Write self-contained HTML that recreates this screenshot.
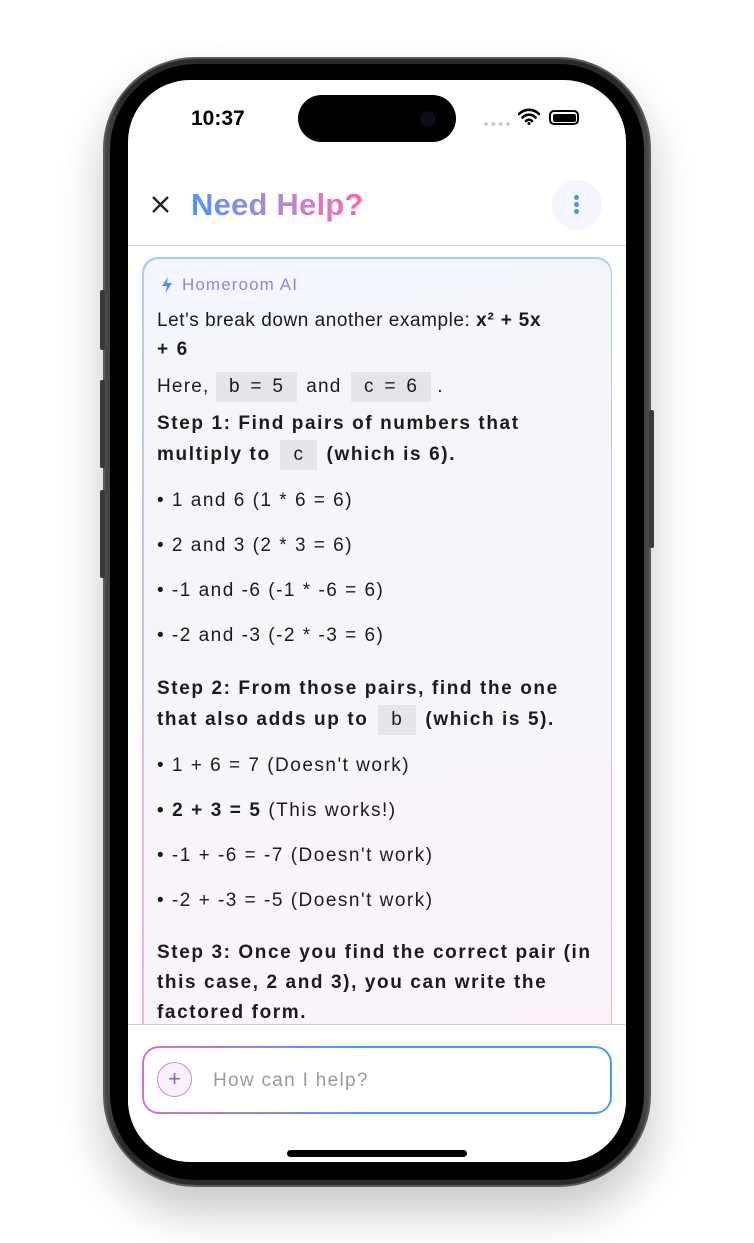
<!DOCTYPE html>
<html><head><meta charset="utf-8"><style>
*{margin:0;padding:0;box-sizing:border-box}
body{width:754px;height:1243px;background:#fff;position:relative;overflow:hidden;font-family:"Liberation Sans",sans-serif}
.body{position:absolute;left:103px;top:57px;width:548px;height:1130px;border-radius:92px;background:linear-gradient(90deg,#4a4a4c,#2a2a2c 3%,#2a2a2c 97%,#4a4a4c);border:2px solid #5a5b5f;box-shadow:0 25px 45px rgba(0,0,0,.22)}
.bezel{position:absolute;left:110px;top:64px;width:534px;height:1116px;border-radius:86px;background:#000}
.btn{position:absolute;background:#3a3a3c;width:5px;border-radius:2px}
.screen{position:absolute;left:128px;top:80px;width:498px;height:1082px;border-radius:62px;background:#fff;overflow:hidden}
.island{position:absolute;left:170px;top:15px;width:158px;height:47px;border-radius:24px;background:#000}
.t{position:absolute;font-size:19px;color:#1b1b1f;letter-spacing:1.5px;white-space:nowrap}
.t b,.b{font-weight:bold;letter-spacing:1.6px}
.code{display:inline-block;background:#e4e5e8;padding:0 13px;height:30px;line-height:30px;vertical-align:middle;margin:0 3px;word-spacing:4px;letter-spacing:.8px}
</style></head><body>
<div class="body"></div>
<div class="bezel"></div>
<div class="btn" style="left:100px;top:290px;height:60px"></div>
<div class="btn" style="left:100px;top:380px;height:88px"></div>
<div class="btn" style="left:100px;top:490px;height:88px"></div>
<div class="btn" style="left:649px;top:410px;height:138px"></div>
<div class="screen">
  <div style="position:absolute;left:63px;top:27px;font-size:21px;font-weight:bold;color:#000">10:37</div>
  <div class="island"><div style="position:absolute;left:122px;top:16px;width:16px;height:16px;border-radius:50%;background:#0c0c1c"></div></div>
  <div style="position:absolute;left:356px;top:42px;width:26px;height:4px;border-top:4px dotted #ccc"></div>
  <svg style="position:absolute;left:390px;top:28px" width="22" height="17" viewBox="0 0 22 17"><path d="M1 6a14 14 0 0 1 20 0M4.5 9.5a9 9 0 0 1 13 0M8 13a4 4 0 0 1 6 0" stroke="#000" stroke-width="2.6" fill="none" stroke-linecap="round"/><circle cx="11" cy="15.5" r="1.5"/></svg>
  <div style="position:absolute;left:421px;top:30px;width:30px;height:15px;border:2px solid #000;border-radius:5px;padding:1.5px"><div style="width:100%;height:100%;background:#000;border-radius:2px"></div></div>
  <svg style="position:absolute;left:23px;top:115px" width="19" height="19" viewBox="0 0 19 19"><path d="M2 2L17 17M17 2L2 17" stroke="#222" stroke-width="2.3"/></svg>
  <div style="position:absolute;left:63px;top:107px;font-size:31px;font-weight:bold;background:linear-gradient(90deg,#4c96fb,#b588d9 50%,#ff65b0);-webkit-background-clip:text;color:transparent;letter-spacing:.2px">Need Help?</div>
  <div style="position:absolute;left:424px;top:100px;width:50px;height:50px;border-radius:50%;background:#f5f5fe"></div>
  <div style="position:absolute;left:446px;top:115px;width:5px;height:5px;border-radius:50%;background:#4b92f6;box-shadow:0 7px 0 #4b92f6,0 14px 0 #4b92f6"></div>
  <div style="position:absolute;left:0;top:165px;width:498px;height:1px;background:#d3d7de"></div>
  <div style="position:absolute;left:14px;top:177px;width:470px;height:800px;border-radius:16px;padding:1.5px;background:linear-gradient(180deg,#a9cbf8,#f4b6d9)">
    <div style="width:100%;height:100%;border-radius:15px;background:linear-gradient(170deg,#f3f6fd,#f7f5fb 50%,#fcf4fa)"></div>
  </div>
  <svg style="position:absolute;left:34px;top:197px" width="10" height="16" viewBox="0 0 10 16"><path d="M6 0L0 9H5L3.5 16L10 6H5Z" fill="#4b92f6"/></svg>
  <div style="position:absolute;left:54px;top:195px;font-size:17px;color:#8f84e3;letter-spacing:1.1px">Homeroom AI</div>
  <div class="t" style="left:29px;top:230px;letter-spacing:.55px">Let's break down another example: <b style="letter-spacing:.8px">x² + 5x</b></div>
  <div class="t b" style="left:29px;top:259px">+ 6</div>
  <div class="t" style="left:29px;top:292px;letter-spacing:1.2px">Here, <span class="code" style="margin-left:0">b = 5</span> and <span class="code" style="margin-right:0">c = 6</span> .</div>
  <div class="t b" style="left:29px;top:333px">Step 1: Find pairs of numbers that</div>
  <div class="t" style="left:29px;top:360px"><b>multiply to</b> <span class="code">c</span> <b>(which is 6).</b></div>
  <div class="t" style="left:29px;top:410px">• 1 and 6 (1 * 6 = 6)</div>
  <div class="t" style="left:29px;top:455px">• 2 and 3 (2 * 3 = 6)</div>
  <div class="t" style="left:29px;top:500px">• -1 and -6 (-1 * -6 = 6)</div>
  <div class="t" style="left:29px;top:545px">• -2 and -3 (-2 * -3 = 6)</div>
  <div class="t b" style="left:29px;top:598px">Step 2: From those pairs, find the one</div>
  <div class="t" style="left:29px;top:625px"><b>that also adds up to</b> <span class="code">b</span> <b>(which is 5).</b></div>
  <div class="t" style="left:29px;top:675px">• 1 + 6 = 7 (Doesn't work)</div>
  <div class="t" style="left:29px;top:720px"><b>• 2 + 3 = 5</b> (This works!)</div>
  <div class="t" style="left:29px;top:765px">• -1 + -6 = -7 (Doesn't work)</div>
  <div class="t" style="left:29px;top:810px">• -2 + -3 = -5 (Doesn't work)</div>
  <div class="t b" style="left:29px;top:862px">Step 3: Once you find the correct pair (in</div>
  <div class="t b" style="left:29px;top:892px">this case, 2 and 3), you can write the</div>
  <div class="t b" style="left:29px;top:922px">factored form.</div>
  <div style="position:absolute;left:0;top:944px;width:498px;height:140px;background:#fff;border-top:1px solid #c9cfd9"></div>
  <div style="position:absolute;left:14px;top:966px;width:470px;height:68px;border-radius:17px;padding:2px;background:linear-gradient(90deg,#de6fc4,#4c9af8 45%,#4c9af8)">
    <div style="width:100%;height:100%;border-radius:15px;background:#fff"></div>
  </div>
  <div style="position:absolute;left:29px;top:982px;width:35px;height:35px;border-radius:50%;border:1.5px solid #c68ce0;background:#f8f0fc;color:#9b5cc6;font-size:22px;line-height:31px;text-align:center">+</div>
  <div style="position:absolute;left:85px;top:990px;font-size:19px;color:#9a9a9e;letter-spacing:1.3px">How can I help?</div>
  <div style="position:absolute;left:159px;top:1070px;width:180px;height:7px;border-radius:4px;background:#000"></div>
</div>
</body></html>
